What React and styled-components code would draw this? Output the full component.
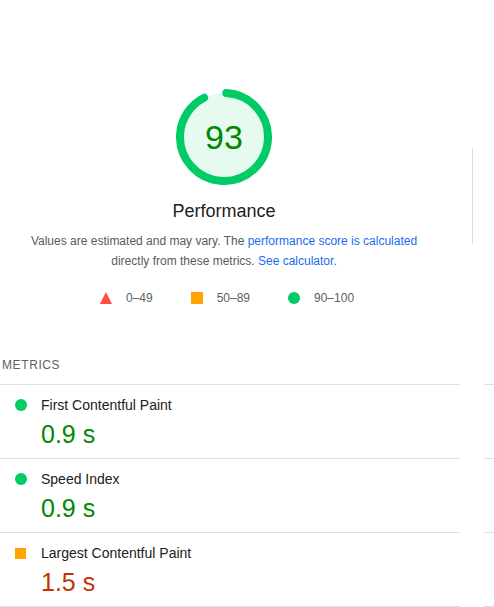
import React from 'react';
import styled, { createGlobalStyle } from 'styled-components';

const GlobalStyle = createGlobalStyle`
  html, body {
    margin: 0;
    padding: 0;
    background: #fff;
    overflow-x: hidden;
  }
  body {
    font-family: "Liberation Sans", Arial, sans-serif;
    color: #212121;
  }
`;

const Page = styled.div`
  width: 968px;
  padding-top: 89px;
`;

const Header = styled.div`
  display: flex;
`;

const ScoreColumn = styled.div`
  width: 448px;
  display: flex;
  flex-direction: column;
  align-items: center;
`;

const Divider = styled.div`
  margin: 59px 0 0 24px;
  width: 0;
  height: 96px;
  border-left: 1px solid #dadada;
`;

const GaugeWrap = styled.div`
  position: relative;
  width: 96px;
  height: 96px;
`;

const GaugeValue = styled.div`
  position: absolute;
  inset: 0;
  display: flex;
  align-items: center;
  justify-content: center;
  font-size: 34px;
  color: #008800;
  padding-top: 1px;
`;

const CategoryTitle = styled.div`
  margin-top: 14px;
  font-size: 18px;
  line-height: 24px;
  color: #212121;
`;

const Description = styled.p`
  margin: 8px 0 0;
  width: 420px;
  text-align: center;
  font-size: 12px;
  line-height: 20px;
  color: #5a5a5a;
`;

const Link = styled.a`
  color: #1a6bf0;
  text-decoration: none;
`;

const Legend = styled.div`
  margin-top: 17px;
  display: flex;
  gap: 38px;
  padding-left: 6px;
`;

const LegendItem = styled.div`
  display: flex;
  align-items: center;
  gap: 14px;
  font-size: 12px;
  line-height: 20px;
  color: #616161;
`;

const Shape = styled.span`
  display: inline-block;
  width: ${(p) => p.size}px;
  height: ${(p) => p.size}px;
  background: ${(p) => p.color};
  border-radius: ${(p) => (p.kind === 'circle' ? '50%' : '0')};
  clip-path: ${(p) => (p.kind === 'triangle' ? 'polygon(50% 0, 100% 100%, 0 100%)' : 'none')};
`;

const MetricsSection = styled.section`
  margin-top: 47px;
`;

const GroupTitle = styled.div`
  padding-left: 2px;
  font-size: 12px;
  line-height: 20px;
  letter-spacing: 0.6px;
  color: #616161;
  text-transform: uppercase;
  margin-bottom: 9px;
`;

const MetricGrid = styled.div`
  display: grid;
  grid-template-columns: 460px 460px;
  grid-auto-flow: column;
  grid-template-rows: repeat(3, auto);
  column-gap: 24px;
`;

const Metric = styled.div`
  display: grid;
  grid-template-columns: 26px 1fr;
  grid-template-rows: 20px 30px;
  row-gap: 4px;
  padding: 10px 0 0 15px;
  border-top: 1px solid #e0e0e0;
  border-bottom: ${(p) => (p.last ? '1px solid #e0e0e0' : 'none')};
  height: ${(p) => (p.last ? 75 : 74)}px;
  box-sizing: border-box;
`;

const MetricIcon = styled.div`
  display: flex;
  align-items: center;
  height: 20px;
`;

const MetricTitle = styled.div`
  font-size: 14px;
  line-height: 20px;
  color: #212121;
`;

const MetricValue = styled.div`
  grid-column: 2;
  font-size: 25px;
  line-height: 30px;
  color: ${(p) => p.color};
`;

const PASS = '#0c6';
const AVERAGE = '#ffa400';
const FAIL = '#ff4e42';

const metrics = [
  { title: 'First Contentful Paint', value: '0.9 s', rating: 'pass' },
  { title: 'Speed Index', value: '0.9 s', rating: 'pass' },
  { title: 'Largest Contentful Paint', value: '1.5 s', rating: 'average' },
  { title: '', value: '', rating: 'none' },
  { title: '', value: '', rating: 'none' },
  { title: '', value: '', rating: 'none' },
];

function Gauge({ score }) {
  const r = 44;
  const circ = 2 * Math.PI * r;
  const arc = score / 100 * circ - 4;
  return (
    <GaugeWrap>
      <svg width="96" height="96" viewBox="0 0 96 96">
        <circle cx="48" cy="48" r="44" fill="#e6faf0" />
        <circle
          cx="48"
          cy="48"
          r={r}
          fill="none"
          stroke={PASS}
          strokeWidth="8"
          strokeLinecap="round"
          strokeDasharray={`${arc} ${circ}`}
          transform="rotate(-87 48 48)"
        />
      </svg>
      <GaugeValue>{score}</GaugeValue>
    </GaugeWrap>
  );
}

function App() {
  return (
    <Page>
      <GlobalStyle />
      <Header>
        <ScoreColumn>
          <Gauge score={93} />
          <CategoryTitle>Performance</CategoryTitle>
          <Description>
            Values are estimated and may vary. The{' '}
            <Link href="#">performance score is calculated</Link>{' '}
            directly from these metrics.{' '}
            <Link href="#">See calculator.</Link>
          </Description>
          <Legend>
            <LegendItem>
              <Shape kind="triangle" size={12} color={FAIL} />
              0–49
            </LegendItem>
            <LegendItem>
              <Shape kind="square" size={12} color={AVERAGE} />
              50–89
            </LegendItem>
            <LegendItem>
              <Shape kind="circle" size={12} color={PASS} />
              90–100
            </LegendItem>
          </Legend>
        </ScoreColumn>
        <Divider />
      </Header>
      <MetricsSection>
        <GroupTitle>Metrics</GroupTitle>
        <MetricGrid>
          {metrics.map((m, i) => (
            <Metric key={i} last={i % 3 === 2}>
              {m.rating !== 'none' && (
                <>
                  <MetricIcon>
                    <Shape
                      kind={m.rating === 'pass' ? 'circle' : 'square'}
                      size={m.rating === 'pass' ? 12 : 11}
                      color={m.rating === 'pass' ? PASS : AVERAGE}
                    />
                  </MetricIcon>
                  <MetricTitle>{m.title}</MetricTitle>
                  <MetricValue color={m.rating === 'pass' ? '#008800' : '#c33300'}>
                    {m.value}
                  </MetricValue>
                </>
              )}
            </Metric>
          ))}
        </MetricGrid>
      </MetricsSection>
    </Page>
  );
}

export default App;
